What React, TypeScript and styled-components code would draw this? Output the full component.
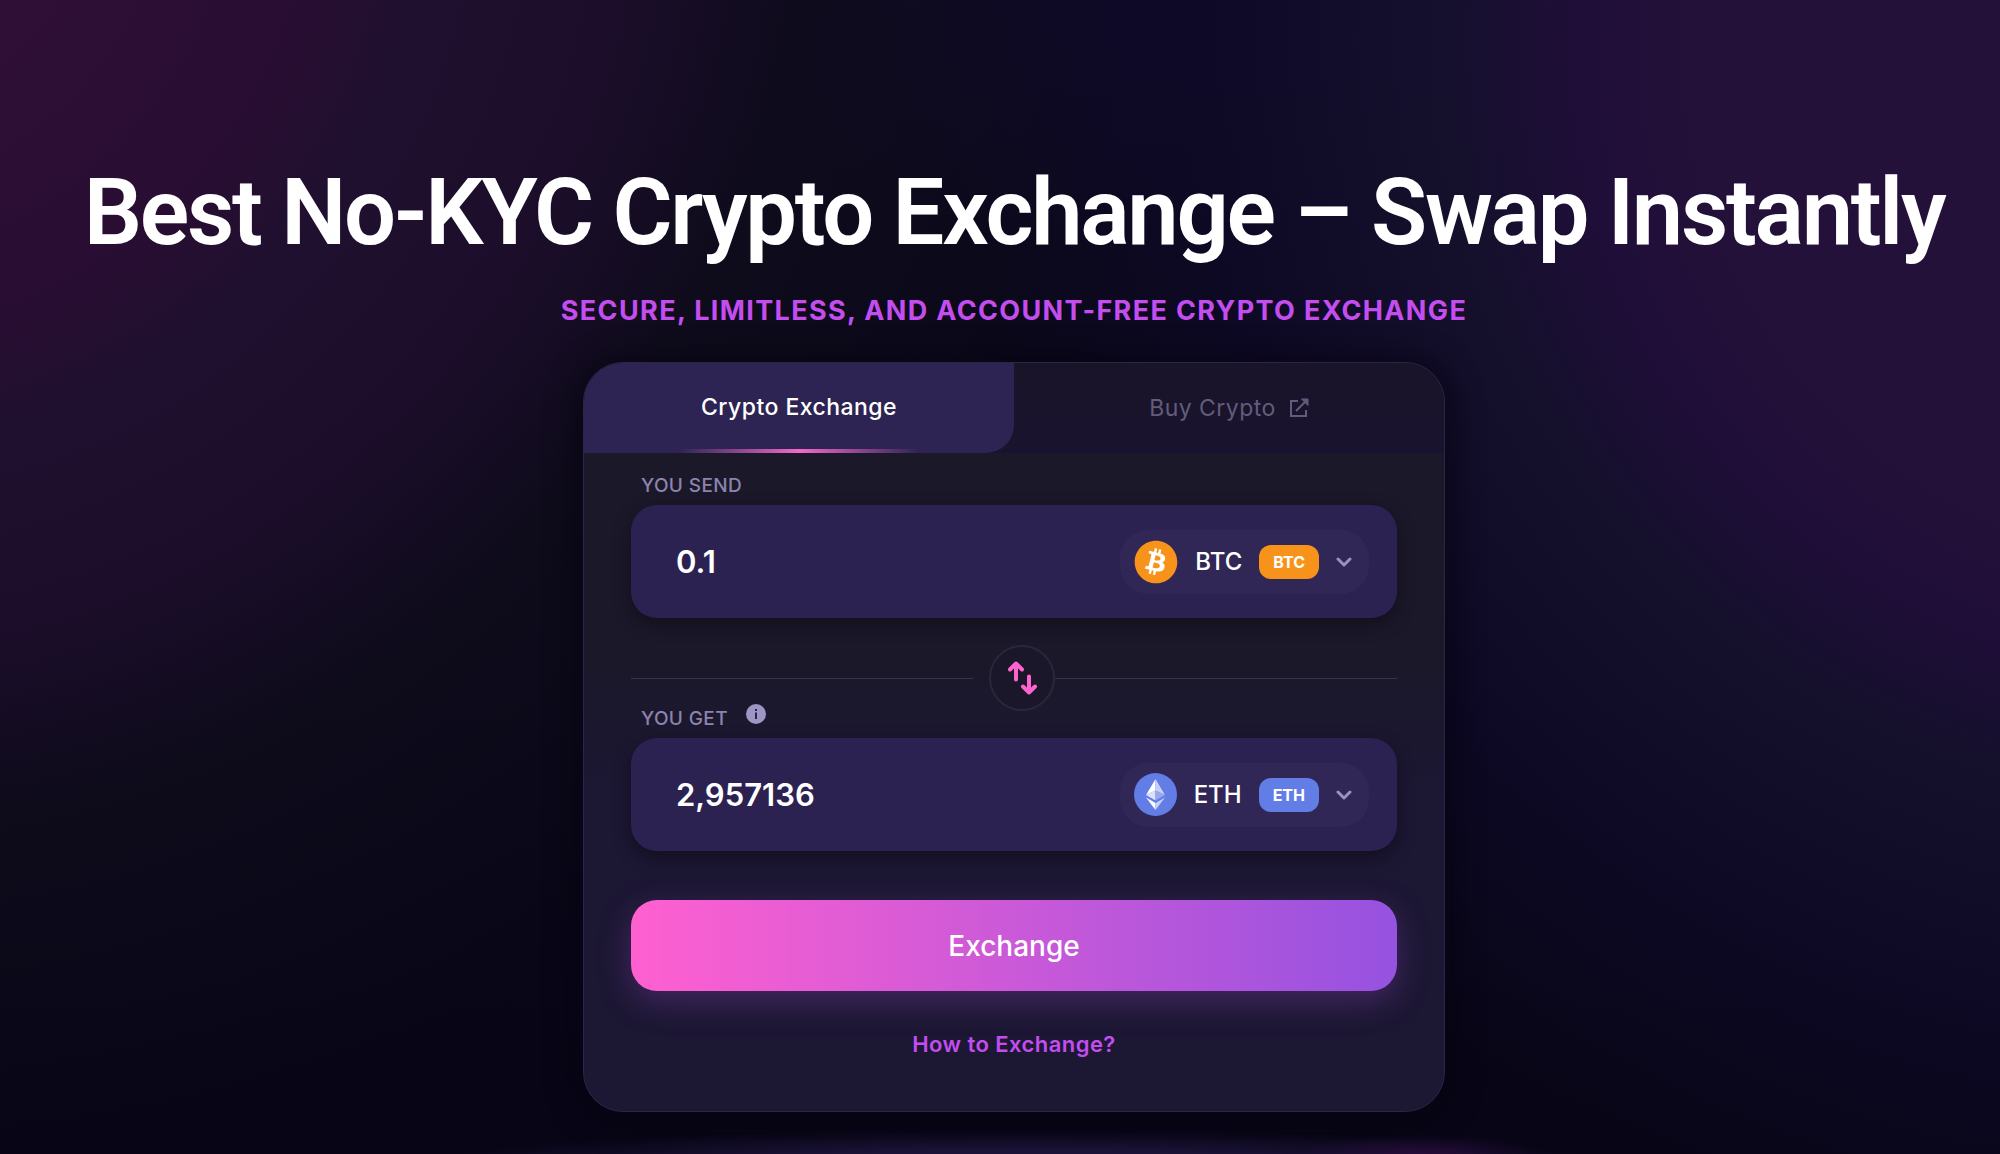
import React, { useState } from "react";
import styled, { createGlobalStyle } from "styled-components";
import { FaBitcoin } from "react-icons/fa";

const sans = `Inter, "Liberation Sans", sans-serif`;

const GlobalStyle = createGlobalStyle`
  *, *::before, *::after { box-sizing: border-box; }
  body {
    margin: 0;
    background: #080516;
    font-family: ${sans};
    color: #fff;
  }
  button, input { font: inherit; color: inherit; }
  svg { flex-shrink: 0; }
`;

const Page = styled.main`
  min-height: 100vh;
  padding: 159px 0 40px 28px;
  display: flex;
  flex-direction: column;
  align-items: center;
  background:
    radial-gradient(ellipse 120px 20px at 71% 100%, rgba(60, 16, 80, 0.5), transparent),
    radial-gradient(ellipse 600px 36px at 51% 101%, rgba(34, 25, 66, 0.8) 40%, transparent),
    radial-gradient(circle 1300px at -8% -12%, #300f36 15%, #290d32 36%, #1f102f 46%, rgba(29, 14, 43, 0.95) 60%, rgba(15, 12, 28, 0.8) 74%, transparent),
    radial-gradient(circle 1250px at 110% 4%, #24113a 40%, #1f0e38 50%, rgba(22, 17, 46, 0.9) 60%, rgba(14, 9, 38, 0.8) 80%, transparent),
    radial-gradient(ellipse 700px 260px at 58% 0%, rgba(18, 10, 62, 0.4), transparent),
    linear-gradient(#0c091b, #080516);
`;

const Title = styled.h1`
  margin: 0;
  font-family: Roboto, ${sans};
  font-size: 92px;
  line-height: 108px;
  font-weight: 600;
  letter-spacing: -0.025em;
  text-align: center;
`;

const Subtitle = styled.p`
  margin: 26px 0 33px;
  font-size: 27px;
  line-height: 36px;
  font-weight: 700;
  letter-spacing: 0.05em;
  text-align: center;
  text-transform: uppercase;
  color: #c44df0;
`;

const Card = styled.section`
  width: 100%;
  max-width: 862px;
  overflow: hidden;
  border: 1px solid #2b2548;
  border-radius: 40px;
  background: linear-gradient(#1b1829 10%, #1b1829 38%, #1c1733 58%);
  box-shadow: 0 4px 30px 6px rgba(5, 3, 16, 0.7);
`;

const Tabs = styled.nav`
  display: grid;
  grid-template-columns: 1fr 1fr;
  height: 90px;
  background: linear-gradient(#191428, #19132f);
`;

const ActiveTab = styled.button`
  position: relative;
  padding: 0 0 2px;
  border: 0;
  border-radius: 0 0 28px 0;
  background: #2d2453;
  font-size: 23px;
  font-weight: 500;
  letter-spacing: 0.02em;
  cursor: pointer;

  &::after {
    content: "";
    position: absolute;
    left: 22%;
    right: 22%;
    bottom: 0;
    height: 4px;
    background: linear-gradient(90deg, transparent, #f06ac6 50%, transparent);
  }
`;

const TabLink = styled.a`
  display: flex;
  align-items: center;
  justify-content: center;
  gap: 13px;
  font-size: 23px;
  letter-spacing: 0.02em;
  color: #625c7c;
  text-decoration: none;
`;

const Form = styled.form`
  display: flex;
  flex-direction: column;
  padding: 18px 47px 51px;
`;

const LabelRow = styled.div`
  display: flex;
  align-items: center;
  gap: 18px;
  height: 34px;
  padding: 0 0 4px 10px;
`;

const Label = styled.label`
  font-size: 19px;
  line-height: 24px;
  font-weight: 500;
  letter-spacing: 0.02em;
  text-transform: uppercase;
  color: #8c84ae;
`;

const InfoButton = styled.button`
  display: flex;
  align-self: flex-start;
  padding: 0;
  border: 0;
  background: none;
  cursor: pointer;
`;

const Field = styled.div`
  display: flex;
  align-items: center;
  gap: 16px;
  height: 113px;
  padding: 0 28px 0 45px;
  border-radius: 26px;
  background: #2b2251;
  box-shadow: 0 6px 16px rgba(16, 12, 26, 0.7);
`;

const Amount = styled.input`
  flex: 1;
  min-width: 0;
  padding: 0;
  border: 0;
  outline: 0;
  background: none;
  font-size: 31px;
  font-weight: 600;
`;

const Picker = styled.button`
  display: flex;
  align-items: center;
  justify-content: flex-end;
  gap: 17px;
  width: 249px;
  height: 64px;
  padding: 0 17px 0 12px;
  border: 0;
  border-radius: 28px;
  background: #302757;
  font-size: 24px;
  font-weight: 500;
  cursor: pointer;
`;

const Coin = styled.span<{ $color: string }>`
  display: flex;
  border-radius: 50%;
  color: ${(p) => p.$color};
  background: radial-gradient(#fff 60%, transparent 62%);
`;

const Network = styled.span<{ $color: string }>`
  padding: 0 14px;
  border-radius: 12px;
  background: ${(p) => p.$color};
  font-size: 16px;
  line-height: 34px;
  font-weight: 700;
`;

const Divider = styled.div`
  display: flex;
  align-items: center;
  margin: 27px 0 -7px;
`;

const Rule = styled.hr`
  flex: 1;
  height: 1px;
  margin: 0;
  border: 0;
  background: #383348;
`;

const SwapButton = styled.button`
  display: flex;
  align-items: center;
  justify-content: center;
  width: 66px;
  height: 66px;
  margin-left: 16px;
  padding: 0;
  border: 2px solid #2b273b;
  border-radius: 50%;
  background: #1b172b;
  cursor: pointer;
`;

const Submit = styled.button`
  height: 91px;
  margin-top: 49px;
  border: 0;
  border-radius: 26px;
  background: linear-gradient(90deg, #ff60d0, #9652e0);
  box-shadow: 0 10px 32px rgba(146, 70, 190, 0.34);
  font-size: 28px;
  font-weight: 500;
  cursor: pointer;
`;

const HelpLink = styled.a`
  align-self: center;
  margin-top: 37px;
  font-size: 22px;
  line-height: 32px;
  font-weight: 600;
  letter-spacing: 0.02em;
  color: #c44df0;
  text-decoration: none;
`;

const ExternalIcon = () => (
  <svg width="20" height="20" viewBox="0 0 20 20" fill="none" stroke="currentColor" strokeWidth="2" aria-hidden="true">
    <path d="M9 3H2v15h15v-6M7 13 16 4" />
    <path d="M12.500 1H19v6.500z" fill="currentColor" stroke="currentColor" strokeWidth="1" />
  </svg>
);

const InfoIcon = () => (
  <svg width="20" height="20" viewBox="0 0 20 20" aria-hidden="true">
    <circle cx="10" cy="10" r="10" fill="#9d96c4" />
    <path d="M10 5v2M10 8.500V15" stroke="#2a2446" strokeWidth="2" />
  </svg>
);

const SwapIcon = () => (
  <svg
    width="32"
    height="34"
    viewBox="0 0 32 34"
    fill="none"
    stroke="#ff63cf"
    strokeWidth="4"
    strokeLinecap="round"
    strokeLinejoin="round"
    aria-hidden="true"
  >
    <path d="M10 18.500V2.500M4 8.500l6-6 6 6M23 15.500v16M17 25.500l6 6 6-6" />
  </svg>
);

const ChevronIcon = () => (
  <svg
    width="16"
    height="10"
    viewBox="0 0 16 10"
    fill="none"
    stroke="#9a92bd"
    strokeWidth="3"
    strokeLinecap="round"
    strokeLinejoin="round"
    aria-hidden="true"
  >
    <path d="m2 2 6 6 6-6" />
  </svg>
);

const EthIcon = () => (
  <svg width="43" height="43" viewBox="0 0 43 43" aria-hidden="true">
    <circle cx="21.500" cy="21.500" r="21.500" fill="#627de6" />
    <path d="M21.500 6 12 22l9.500-4.500z" fill="#fff" />
    <path d="M21.500 6 31 22l-9.500-4.500z" fill="#c5cff7" />
    <path d="m12 22 9.500-4.500v10z" fill="#dbe1fb" />
    <path d="m31 22-9.500-4.500v10z" fill="#98a8ee" />
    <path d="m12 24.500 9.500 5.500v7z" fill="#fff" />
    <path d="M31 24.500 21.500 30v7z" fill="#c5cff7" />
  </svg>
);

type CurrencyProps = { code: string; color: string; icon: React.ReactNode };

const CurrencyPicker = ({ code, color, icon }: CurrencyProps) => (
  <Picker type="button" aria-haspopup="listbox">
    <Coin $color={color}>{icon}</Coin>
    <span>{code}</span>
    <Network $color={color}>{code}</Network>
    <ChevronIcon />
  </Picker>
);

export default function App() {
  const [send, setSend] = useState("0.1");
  const [get, setGet] = useState("2,957136");

  return (
    <>
      <GlobalStyle />
      <Page>
        <Title>Best No-KYC Crypto Exchange – Swap Instantly</Title>
        <Subtitle>Secure, limitless, and account-free crypto exchange</Subtitle>
        <Card>
          <Tabs>
            <ActiveTab type="button">Crypto Exchange</ActiveTab>
            <TabLink href="#buy">
              Buy Crypto
              <ExternalIcon />
            </TabLink>
          </Tabs>
          <Form onSubmit={(e) => e.preventDefault()}>
            <LabelRow>
              <Label htmlFor="send">You send</Label>
            </LabelRow>
            <Field>
              <Amount id="send" inputMode="decimal" value={send} onChange={(e) => setSend(e.target.value)} />
              <CurrencyPicker code="BTC" color="#f7931a" icon={<FaBitcoin size={44} />} />
            </Field>
            <Divider>
              <Rule />
              <SwapButton type="button" aria-label="Swap currencies">
                <SwapIcon />
              </SwapButton>
              <Rule />
            </Divider>
            <LabelRow>
              <Label htmlFor="get">You get</Label>
              <InfoButton type="button" aria-label="Rate details">
                <InfoIcon />
              </InfoButton>
            </LabelRow>
            <Field>
              <Amount id="get" inputMode="decimal" value={get} onChange={(e) => setGet(e.target.value)} />
              <CurrencyPicker code="ETH" color="#627de6" icon={<EthIcon />} />
            </Field>
            <Submit type="submit">Exchange</Submit>
            <HelpLink href="#how-to">How to Exchange?</HelpLink>
          </Form>
        </Card>
      </Page>
    </>
  );
}
